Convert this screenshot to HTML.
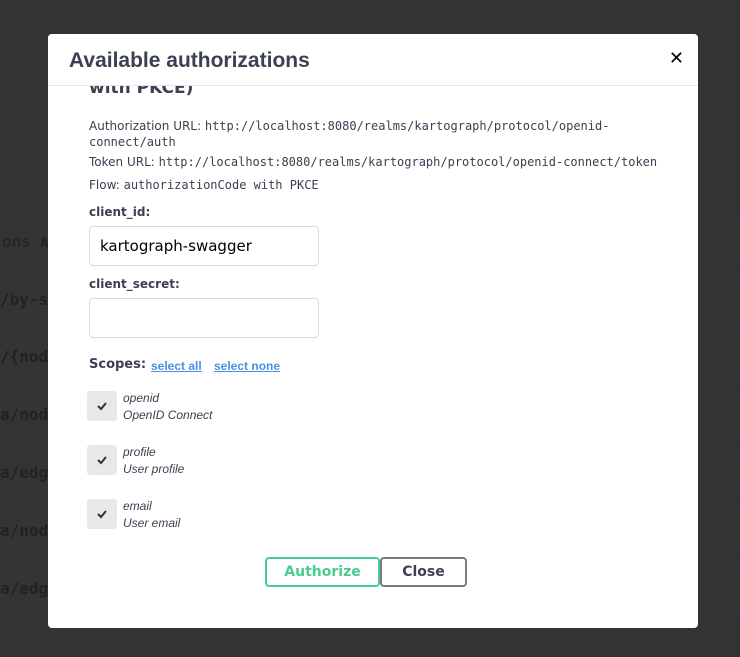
<!DOCTYPE html>
<html><head><style>
body{margin:0;width:740px;height:657px;background:#333;position:relative;overflow:hidden;font-family:"Liberation Sans",sans-serif}
.row{position:absolute;left:0;width:740px;height:42px;border-top:1px solid #2f3844;border-bottom:1px solid #2f3844;background:#343434}
.row span{position:absolute;left:0;top:12px;font:bold 16px "DejaVu Sans Mono",monospace;color:#222}
.m{position:absolute;left:48px;top:34px;width:650px;height:594px;background:#fff;border-radius:4px;overflow:hidden}
.hd{position:absolute;left:0;top:0;width:650px;height:51px;border-bottom:1px solid #e5e5e5;background:#fff;z-index:2}
.hd h3{margin:0;position:absolute;left:21px;top:15px;font:bold 21px "Liberation Sans",sans-serif;color:#3b4151}
.x{position:absolute;right:14px;top:14px;font:bold 18px "DejaVu Sans";color:#000}
.c{position:absolute;left:41px;top:0;width:600px;color:#3b4151}
.t{position:absolute;font:12px "DejaVu Sans",sans-serif;color:#3b4151;white-space:nowrap}
.t code{font:12px "DejaVu Sans Mono",monospace}
.lb{position:absolute;font:bold 12px "DejaVu Sans",sans-serif;color:#3b4151;white-space:nowrap}
.in{position:absolute;left:0;width:230px;height:40px;border:1px solid #d9d9d9;border-radius:4px;box-sizing:border-box;font:15px "DejaVu Sans",sans-serif;padding:10px 10px;color:#000}
.cb{position:absolute;left:-2px;width:30px;height:30px;background:#e8e8e8;border-radius:3px}
.cb svg{position:absolute;left:9px;top:10px}
.sc{position:absolute;left:34px;font:italic 12px/17px "Liberation Sans",sans-serif;color:#3b4151;white-space:nowrap}
a{color:#4990e2;font:bold 12px "Liberation Sans";text-decoration:underline;position:absolute;white-space:nowrap}
.btn{position:absolute;height:30px;box-sizing:border-box;border-radius:4px;font:bold 14px "DejaVu Sans";text-align:center;line-height:27px}
</style></head><body>
<div class="row" style="top:219px"><span style="left:2px;font-weight:normal">ons <span style="position:static;font-size:13px">A</span></span></div>
<div class="row" style="top:277px"><span>/by-sl</span></div>
<div class="row" style="top:334px"><span>/{node</span></div>
<div class="row" style="top:392px"><span>a/node</span></div>
<div class="row" style="top:450px"><span>a/edge</span></div>
<div class="row" style="top:508px"><span>a/node</span></div>
<div class="row" style="top:566px"><span>a/edge</span></div>
<div class="m">
<div class="hd"><h3>Available authorizations</h3><div class="x">✕</div></div>
<div class="c">
<div style="position:absolute;left:0;top:44px;font:bold 17px 'DejaVu Sans';color:#3b4151;white-space:nowrap">with PKCE)</div>
<div class="t" style="top:84px;line-height:16px">Authorization URL: <code>http://localhost:8080/realms/kartograph/protocol/openid-</code><br><code>connect/auth</code></div>
<div class="t" style="top:121px">Token URL: <code>http://localhost:8080/realms/kartograph/protocol/openid-connect/token</code></div>
<div class="t" style="top:144px">Flow: <code>authorizationCode with PKCE</code></div>
<div class="lb" style="top:171px">client_id:</div>
<div class="in" style="top:192px">kartograph-swagger</div>
<div class="lb" style="top:243px">client_secret:</div>
<div class="in" style="top:264px"></div>
<div class="lb" style="top:323px;font-size:13px">Scopes:</div>
<a style="left:62px;top:325px">select all</a>
<a style="left:125px;top:325px">select none</a>
<div class="cb" style="top:357px"><svg width="12" height="10" viewBox="0 0 12 10"><path d="M2 5l3 3 5-6" stroke="#333" stroke-width="2" fill="none"/></svg></div>
<div class="sc" style="top:356px">openid<br>OpenID Connect</div>
<div class="cb" style="top:411px"><svg width="12" height="10" viewBox="0 0 12 10"><path d="M2 5l3 3 5-6" stroke="#333" stroke-width="2" fill="none"/></svg></div>
<div class="sc" style="top:410px">profile<br>User profile</div>
<div class="cb" style="top:465px"><svg width="12" height="10" viewBox="0 0 12 10"><path d="M2 5l3 3 5-6" stroke="#333" stroke-width="2" fill="none"/></svg></div>
<div class="sc" style="top:464px">email<br>User email</div>
</div>
<div class="btn" style="left:217px;top:523px;width:115px;border:2px solid #49cc90;color:#49cc90">Authorize</div>
<div class="btn" style="left:332px;top:523px;width:87px;border:2px solid #7a7a7a;color:#3b4151">Close</div>
</div>
</body></html>
